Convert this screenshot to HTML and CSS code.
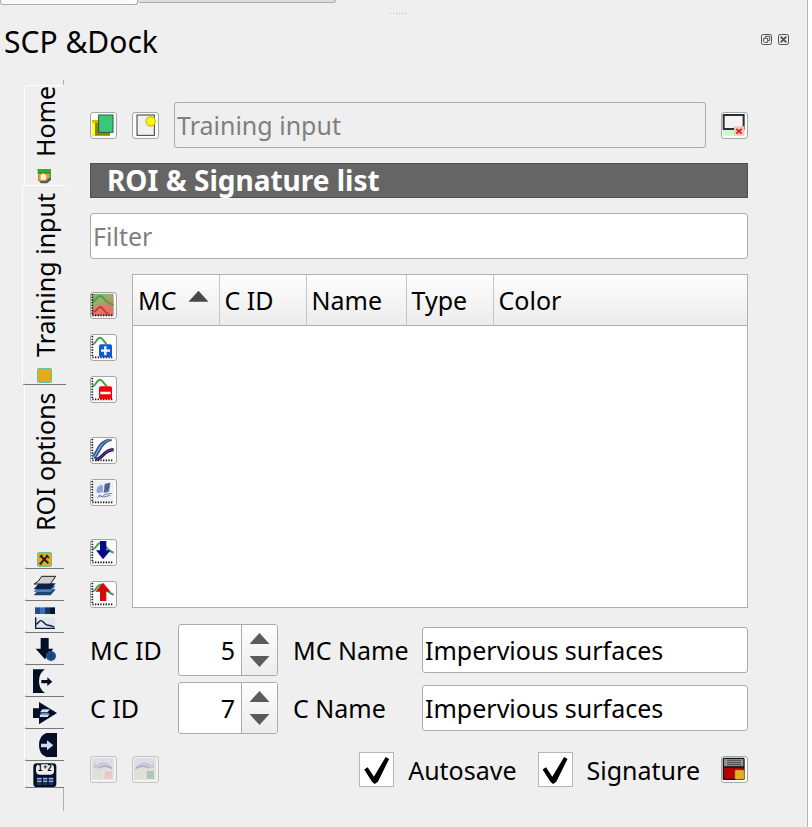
FILE: index.html
```html
<!DOCTYPE html>
<html lang="en">
<head>
<meta charset="utf-8">
<title>SCP Dock</title>
<link rel="stylesheet" href="styles.css">
</head>
<body>
<main class="dock">
  <div class="stubs"><span class="stub stub-front"></span><span class="stub stub-back"></span></div>
  <div class="grip"><i></i><i></i><i></i><i></i><i></i><i></i></div>
  <header class="titlebar">
    <h1>SCP &amp;Dock</h1>
    <button class="win" aria-label="Float"><svg viewBox="0 0 33 33"><rect x="1.500" y="1.500" width="30" height="30" rx="5"/><path d="M13 12V7h13v13h-5M8 13h12v12H10l-2-2z"/></svg></button>
    <button class="win" aria-label="Close"><svg viewBox="0 0 33 33"><rect x="1.500" y="1.500" width="30" height="30" rx="5"/><path class="cross" d="M8 8l17 17M25 8L8 25"/></svg></button>
  </header>

  <div class="body">
    <nav class="tabs" aria-label="Pages">
      <button class="tab tab-home"><span>Home</span>
        <svg viewBox="0 0 45 45"><path d="M5 8h37v25L30 43H12L4 34z" fill="#466060"/><path d="M1 0h41v28H4z" fill="#3da535"/><path d="M4 12h36" stroke="#247b2b" stroke-width="4" stroke-dasharray="4 3"/><path d="M3 14h35v11L26 36H7z" fill="#f1963b"/><path d="M11 18l9-5 8 7-2 12H11z" fill="#fff8df"/></svg></button>
      <button class="tab tab-training active"><span>Training input</span>
        <svg viewBox="0 0 45 45"><rect x="1.500" y="1.500" width="42" height="42" rx="4" fill="#e6a91b" stroke="#5fc3a5" stroke-width="3"/></svg></button>
      <button class="tab tab-roi"><span>ROI options</span>
        <svg viewBox="0 0 45 45"><rect x="1.500" y="1.500" width="42" height="42" rx="4" fill="#e6a91b" stroke="#5fc3a5" stroke-width="3"/><path d="M12 13l22 21M32 11L11 34" stroke="#1d1d24" stroke-width="6"/><path d="M8 15l8-7M28 9l8 9M7 33l7 5" stroke="#1d1d24" stroke-width="4"/></svg></button>
      <button class="tab small" aria-label="Band set">
        <svg viewBox="0 0 72 72"><path d="M18 49h50L53 67H2z" fill="#1d4477"/><path d="M18 38h50L53 57H2z" fill="#4c82c4"/><path d="M18 31h50L53 49H2z" fill="#0b2347"/><path d="M26 10h42L52 33H3q14-5 23-23z" fill="#cfcfcf" stroke="#1b1b22" stroke-width="3"/></svg></button>
      <button class="tab small" aria-label="Basic tools">
        <svg viewBox="0 0 72 72"><path d="M6 7h15v20H6z" fill="#234e8a"/><path d="M21 7h15v20H21z" fill="#3c70b4"/><path d="M36 7h15v20H36z" fill="#1a355e"/><path d="M51 7h15v20H51z" fill="#061430"/><path d="M7 38h59v34H7z" fill="#dfe5ec"/><path d="M8 37v33h58M8 58c8 0 8-11 16-11 7 0 9 11 18 13 8 1 13 2 22 6" fill="none" stroke="#0d1f3c" stroke-width="4"/></svg></button>
      <button class="tab small" aria-label="Download products">
        <svg viewBox="0 0 72 72"><path d="M23 3h24v32h14L36 67 8 35h15z" fill="#020f24"/><circle cx="54" cy="57" r="15" fill="#285b96"/><path d="M38 57h32M54 42v30M42 49q12 6 24 0M42 65q12-6 24 0" fill="none" stroke="#0c2b55" stroke-width="2"/></svg></button>
      <button class="tab small" aria-label="Preprocessing">
        <svg viewBox="0 0 72 72"><path d="M0 1h36Q18 12 18 36t18 36H0z" fill="#020f24"/><path d="M25 33h18V25l15 13-15 13V43H25z" fill="#020f24"/></svg></button>
      <button class="tab small" aria-label="Band processing">
        <svg viewBox="0 0 72 72"><path d="M0 22h18V3l54 33-54 34V51H0z" fill="#020f24"/><path d="M28 25h22l-6 9H21zM22 40h27l-5 8H20z" fill="#d6dde8"/><path d="M25 36h24l-4 5H20z" fill="#658bd0"/></svg></button>
      <button class="tab small" aria-label="Postprocessing">
        <svg viewBox="0 0 72 72"><path d="M72 0H40Q18 8 18 36t22 36h32z" fill="#020f24"/><path d="M24 32h18V22l19 15-19 15V43H24z" fill="#cbd8fa"/></svg></button>
      <button class="tab small last" aria-label="Band calc">
        <svg viewBox="0 0 72 72"><rect x="1" y="1" width="69" height="71" rx="10" fill="#020f24"/><rect x="9" y="4" width="54" height="31" rx="12" fill="#eee"/><text x="14" y="25" class="calc">1</text><text x="31" y="18" class="calc calc-sup">+</text><text x="43" y="25" class="calc">2</text><path d="M12 47h14M30 47h13M47 47h14M12 55h14M30 55h13M47 55h14" stroke="#8fa8ee" stroke-width="5"/><path d="M12 63h14M30 63h13M47 63h14" stroke="#3c5588" stroke-width="3"/></svg></button>
    </nav>

    <section class="panel">
      <div class="toolbar">
        <button class="tool" aria-label="Open training input"><svg viewBox="3 3 75 75"><path d="M6 24h54v47H6z" fill="#8a8500"/><path d="M6 30h9v41H6z" fill="#ffff16"/><path d="M6 24h20v8H6z" fill="#d8bc00"/><rect x="26" y="9" width="43" height="52" fill="#3cc776" stroke="#235f3c" stroke-width="3"/></svg></button>
        <button class="tool" aria-label="New training input"><svg viewBox="3 3 75 75"><rect x="15" y="9" width="52" height="61" fill="#f1f1f1" stroke="#383838" stroke-width="3"/><circle cx="56" cy="28" r="14" fill="#fff80b" stroke="#c9c01c" stroke-width="4"/></svg></button>
        <input class="field grow" type="text" placeholder="Training input" aria-label="Training input" disabled>
        <button class="tool" aria-label="Reset input"><svg viewBox="3 3 75 75"><path d="M6 50h36v21H6z" fill="#c7ffc7"/><rect x="8" y="9" width="60" height="42" fill="#f3f3f3" stroke="#2c2d30" stroke-width="6"/><path d="M39 43h31v28H39z" fill="#f5c7b5"/><path d="M46 51l16 14M62 51L46 65" stroke="#e51b23" stroke-width="5"/></svg></button>
      </div>

      <h2>ROI &amp; Signature list</h2>
      <input class="field" type="text" placeholder="Filter" aria-label="Filter">

      <div class="list">
        <div class="side">
          <div class="group">
            <button class="tool" aria-label="Merge signatures"><svg viewBox="3 3 75 75"><defs><linearGradient id="mix" x2="0.500" y2="1"><stop stop-color="#7ab95e"/><stop offset=".45" stop-color="#a0aa6c"/><stop offset=".8" stop-color="#d97969"/></linearGradient></defs><path d="M5 5h66v66H5z" fill="url(#mix)"/><path d="M8 29c10-2 12-18 23-17 12 1 11 21 40 26" class="line green"/><path d="M8 60c12 0 14-16 24-15 9 1 10 18 24 21" class="line" stroke="#ef263a"/><path d="M7 6v64h64" class="axis"/></svg></button>
            <button class="tool" aria-label="Add signature"><svg viewBox="3 3 75 75"><path d="M8 31c10-2 12-20 22-20 7 0 10 11 20 19" class="line green"/><path d="M7 6v64h64" class="axis"/><rect x="27" y="31" width="39" height="39" rx="6" fill="#1257d3"/><path d="M46 37v27M33 50h27" stroke="#fff" stroke-width="7"/></svg></button>
            <button class="tool" aria-label="Delete signature"><svg viewBox="3 3 75 75"><path d="M8 31c10-2 12-20 22-20 7 0 10 11 20 19" class="line green"/><path d="M7 6v64h64" class="axis"/><rect x="27" y="31" width="39" height="39" rx="6" fill="#f00208"/><path d="M31 51h31" stroke="#fff" stroke-width="8"/></svg></button>
          </div>
          <div class="group">
            <button class="tool" aria-label="Signature plot"><svg viewBox="3 3 75 75"><path d="M7 6v64h64" class="axis"/><path d="M7 58C23 48 22 13 58 8M12 64C30 49 31 16 65 8" fill="none" stroke="#305c98" stroke-width="6"/><path d="M10 60C27 49 26 15 61 8" fill="none" stroke="#97b4d5" stroke-width="2"/><path d="M16 67C42 66 35 41 71 38" fill="none" stroke="#24105b" stroke-width="10"/><path d="M16 67C42 66 35 41 71 38" fill="none" stroke="#8d79ae" stroke-width="2"/></svg></button>
            <button class="tool" aria-label="Scatter plot"><svg viewBox="3 3 75 75"><path d="M5 5h66v65H5z" fill="#eef0f6"/><path d="M22 25l10-8 7 4v17l-15 5-5-6z" fill="#8aa4e8"/><path d="M44 14l17-3-4 27-16 4z" fill="#62739b"/><path d="M45 25l12-12M44 35l14-12" stroke="#26386b" stroke-width="3"/><path d="M22 56l8-6 7 3 9-7 19-3M26 49l15 5 20-5" fill="none" stroke="#69809b" stroke-width="3"/><path d="M7 6v64h64" class="axis"/></svg></button>
          </div>
          <div class="group">
            <button class="tool" aria-label="Import signatures"><svg viewBox="3 3 75 75"><path d="M8 31c12-2 12-20 25-20 13 0 13 24 38 30" class="line green"/><path d="M7 6v64h64" class="axis"/><path d="M30 6h19v28h13L39 61 18 34h12z" fill="#06068f"/></svg></button>
            <button class="tool" aria-label="Export signatures"><svg viewBox="3 3 75 75"><path d="M8 31c12-2 12-20 25-20 13 0 13 24 38 30" class="line green"/><path d="M7 6v64h64" class="axis"/><path d="M30 60h19V32h13L39 5 16 32h14z" fill="#d30b0b"/></svg></button>
          </div>
        </div>
        <div class="tablebox">
          <table>
            <colgroup><col class="c-first"><col class="c-id"><col class="c-name"><col class="c-id"><col></colgroup>
            <thead><tr><th aria-sort="ascending">MC<i class="sort"></i></th><th>C ID</th><th>Name</th><th>Type</th><th>Color</th></tr></thead>
            <tbody></tbody>
          </table>
        </div>
      </div>

      <div class="form">
        <label for="mc">MC ID</label>
        <div class="spin"><input id="mc" type="number" value="5"><div class="steps"><button aria-label="Increase MC ID"><i class="up"></i></button><button aria-label="Decrease MC ID"><i class="down"></i></button></div></div>
        <label for="mcname">MC Name</label>
        <input id="mcname" class="field" type="text" value="Impervious surfaces">
        <label for="c">C ID</label>
        <div class="spin"><input id="c" type="number" value="7"><div class="steps"><button aria-label="Increase C ID"><i class="up"></i></button><button aria-label="Decrease C ID"><i class="down"></i></button></div></div>
        <label for="cname">C Name</label>
        <input id="cname" class="field" type="text" value="Impervious surfaces">
      </div>

      <div class="footer">
        <button class="tool" aria-label="Undo" disabled><svg viewBox="3 3 75 75"><path d="M6 7h65v64H6z" fill="#e0e0d8"/><path d="M6 7h65v30H6z" fill="#dedee6"/><path d="M11 36V19l9 7q24-17 45 6v6q-23-13-38-4l7 4z" fill="#c9c7dc"/><path d="M28 35q20-9 39 3" fill="none" stroke="#aaaab0" stroke-width="4"/><path d="M42 43h26v27H42z" fill="#e5c9cb" stroke="#f1eaea" stroke-width="2"/></svg></button>
        <button class="tool" aria-label="Redo" disabled><svg viewBox="3 3 75 75"><path d="M6 7h65v64H6z" fill="#e0e0d8"/><path d="M6 7h65v30H6z" fill="#dedee6"/><path d="M66 36V19l-9 7q-24-17-45 6v6q23-13 38-4l-7 4z" fill="#c9c7dc"/><path d="M10 38q19-12 39-3" fill="none" stroke="#aaaab0" stroke-width="4"/><path d="M42 43h26v27H42z" fill="#b4c5bb" stroke="#edf1ee" stroke-width="2"/></svg></button>
        <label class="check first"><input type="checkbox" checked>Autosave</label>
        <label class="check"><input type="checkbox" checked>Signature</label>
        <button class="tool save" aria-label="Save to training input"><svg viewBox="3 3 75 75"><rect x="7" y="7" width="62" height="63" rx="2" fill="#b30000" stroke="#151515" stroke-width="4"/><path d="M9 9h58v23H9z" fill="#929292"/><path d="M18 13h42M18 20h42M18 26h42" stroke="#505050" stroke-width="3"/><path d="M7 33h62" stroke="#151515" stroke-width="4"/><rect x="42" y="42" width="28" height="28" rx="3" fill="#e8ae20" stroke="#91812d" stroke-width="2"/></svg></button>
      </div>
    </section>
  </div>
</main>
</body>
</html>
```
FILE: styles.css
```css
* { box-sizing: border-box; }

body {
  margin: 0;
  background: #fff;
  color: #000;
  font: 25px/34px "Noto Sans", "Open Sans", sans-serif;
}

button, input { font: inherit; color: inherit; margin: 0; }
button { padding: 0; border: 0; background: none; }
svg { display: block; }

.dock {
  display: flex;
  flex-direction: column;
  min-height: 100vh;
  margin-right: 4px;
  background: #efefef;
  border-right: 1px solid #b4b4b4;
}

/* Bottom edges of the docked tabs above */
.stubs { display: flex; height: 12px; align-items: flex-start; }
.stub { border: 1px solid #adadad; border-top: 0; border-radius: 0 0 3px 3px; }
.stub-front { width: 138px; height: 5px; background: #fbfbfb; }
.stub-back { width: 198px; height: 3px; background: #dedede; border-left: 0; }

.grip { display: flex; justify-content: center; gap: 2px; height: 3px; margin-right: 12px; }
.grip i { width: 1px; height: 1px; margin-top: 1px; background: #b5b5b5; }

.titlebar { display: flex; align-items: center; gap: 6px; height: 53px; padding: 0 18px 0 4px; }
h1 { flex: 1; margin: 0; font-size: 30px; font-weight: 400; }
.win { width: 11px; height: 11px; margin-bottom: 4px; }
.win svg { width: 11px; height: 11px; fill: none; stroke: #55554f; stroke-width: 3; }
.win .cross { stroke-width: 6; }

.body { display: flex; flex: 1; padding-right: 59px; }

/* Vertical page tabs */
.tabs { display: flex; flex-direction: column; width: 90px; padding: 17px 0 0 22px; }
.tab {
  display: flex;
  flex-direction: column;
  align-items: center;
  width: 40px;
  margin-left: 2px;
  border-left: 1px solid #fff;
  border-bottom: 1px solid #777;
  border-bottom-left-radius: 3px;
}
.tab span { flex: 1; writing-mode: vertical-rl; transform: rotate(180deg); text-align: right; line-height: 36px; }
.tab svg { flex: none; width: 15px; height: 15px; }
.tab-home { height: 100px; padding-bottom: 1px; border-top: 1px solid #fff; border-bottom: 0; border-radius: 3px 0 0; }
.tab-training { height: 200px; padding: 7px 0 1px; border-top: 1px solid #fff; }
.tab-roi { height: 184px; padding: 7px 0 1px; }
.tab.active { width: 44px; margin-left: 0; }
.tab.small { height: 32px; padding-top: 4px; }
.tab.small svg { width: 24px; height: 24px; }
.tab.last { height: 27px; padding-top: 2px; }
.tabs::before, .tabs::after { content: ""; width: 1px; height: 5px; margin-left: 41px; margin-top: -5px; background: #b0b0b0; }
.tabs::after { height: 23px; margin-top: 0; }
.calc { font: bold 24px "DejaVu Sans Mono", monospace; fill: #000; }
.calc-sup { font-size: 20px; }

.panel { display: flex; flex: 1; flex-direction: column; min-width: 0; padding: 34px 0 40px; }
.toolbar { display: flex; align-items: center; gap: 15px; }

.tool {
  flex: none;
  width: 27px;
  height: 27px;
  overflow: hidden;
  background: #fcfcfc;
  border: 1px solid #a6a6a6;
  border-radius: 3px;
}
.tool:disabled { background: #f2f2f2; border-color: #c3c3c3; }
.tool svg { width: 25px; height: 25px; }
.line { fill: none; stroke-width: 6; }
.green { stroke: #45a34a; }
.axis { fill: none; stroke: #111; stroke-width: 5; stroke-dasharray: 4 4; }

.field {
  width: 100%;
  min-width: 0;
  height: 46px;
  padding: 0 2px;
  background: #fff;
  border: 1px solid #ababab;
  border-radius: 3px;
}
.field::placeholder { color: #7f7f7f; opacity: 1; }
.field:disabled { background: #efefef; }
.grow { flex: 1; }

h2 {
  margin: 15px 0;
  padding-left: 16px;
  background: #656565;
  border: 1px solid #505050;
  color: #fff;
  font-size: 28px;
  line-height: 33px;
  font-weight: 700;
}

.list { display: flex; flex: 1; gap: 15px; margin-top: 15px; }
.side { display: flex; flex-direction: column; justify-content: space-between; padding-top: 18px; }
.group { display: flex; flex-direction: column; gap: 15px; }
.tablebox { flex: 1; background: #fff; border: 1px solid #b0b0b0; }
table { width: 100%; border-collapse: collapse; table-layout: fixed; }
th {
  height: 50px;
  padding: 0 0 0 5px;
  background: linear-gradient(#fdfdfd, #ececec);
  border-bottom: 1px solid #b0b0b0;
  border-left: 1px solid #c6c6c6;
  font-weight: 400;
  text-align: left;
}
th:first-child { border-left: 0; }
.c-first { width: 86px; }
.c-id { width: 87px; }
.c-name { width: 100px; }

.sort, .up, .down { display: inline-block; width: 20px; height: 11px; background: #5b5b5b; }
.sort, .up { clip-path: polygon(50% 0, 100% 100%, 0 100%); }
.down { clip-path: polygon(0 0, 100% 0, 50% 100%); }
.sort { margin-left: 12px; vertical-align: 8px; background: #484848; }

.form {
  display: grid;
  grid-template-columns: 73px 100px 114px 1fr;
  gap: 6px 15px;
  align-items: center;
  margin-top: 16px;
}
.form label { white-space: nowrap; }
.spin { display: flex; height: 52px; background: #fff; border: 1px solid #ababab; border-radius: 3px; overflow: hidden; }
.spin input { flex: 1; min-width: 0; padding: 0 6px 0 0; border: 0; background: none; text-align: right; appearance: textfield; }
.spin input::-webkit-inner-spin-button { appearance: none; margin: 0; }
.steps { display: flex; flex-direction: column; justify-content: center; gap: 12px; width: 36px; border-left: 1px solid #ababab; background: linear-gradient(#fefefe, #ececec); }
.steps button { display: flex; justify-content: center; height: 11px; }

.footer { display: flex; align-items: center; gap: 15px; margin-top: 18px; }
.check { display: flex; align-items: center; gap: 14px; margin-left: 6px; }
.check.first { margin-left: auto; }
.check input { display: grid; width: 35px; height: 35px; appearance: none; background: #fff; border: 1px solid #b5b5b5; }
.check input:checked::before {
  content: "";
  width: 25px;
  height: 27px;
  margin: 4px;
  background: #000;
  clip-path: polygon(0 46%, 14% 38%, 39% 73%, 86% 0, 100% 7%, 55% 92%, 42% 100%, 32% 93%);
}
.save { margin-left: 6px; }
```
